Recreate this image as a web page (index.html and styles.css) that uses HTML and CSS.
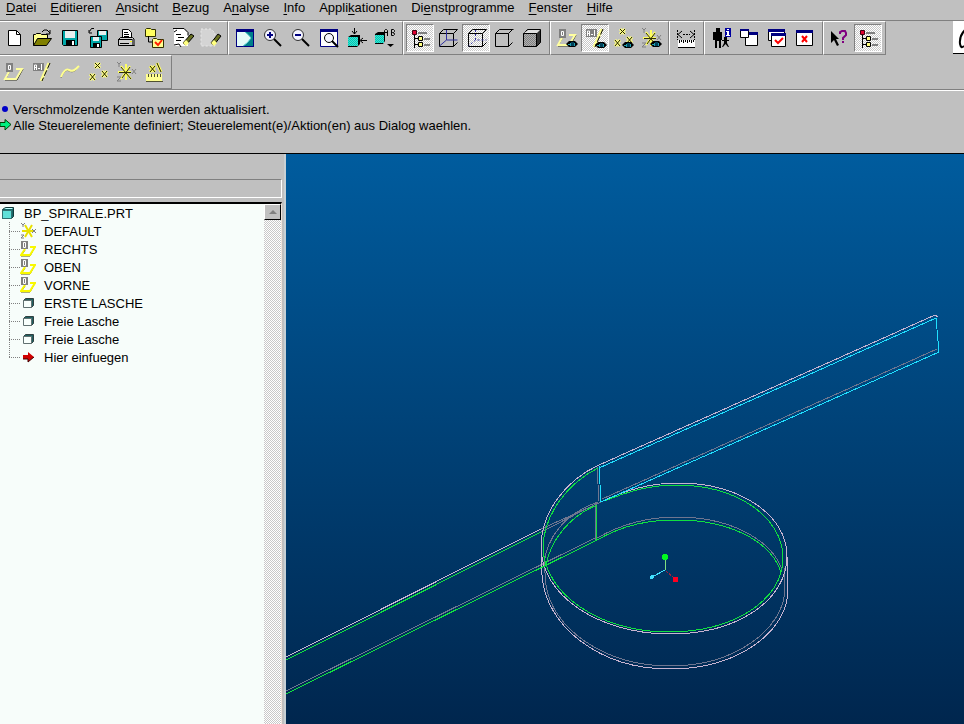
FILE: index.html
```
<!DOCTYPE html>
<html lang="de">
<head>
    <meta charset="UTF-8">
    <meta name="viewport" content="width=device-width, initial-scale=1.0">
    <title>BP_SPIRALE</title>
    <link rel="stylesheet" href="styles.css">
</head>
<body>

    <!-- icon set -->
    <svg class="sprite" xmlns="http://www.w3.org/2000/svg">
        <defs>
            <pattern id="dots" width="2" height="2" patternUnits="userSpaceOnUse">
                <path d="M0 0h1v1h-1zM1 1h1v1h-1z" fill="#808080"/>
            </pattern>
            <pattern id="teal-dots" width="2" height="2" patternUnits="userSpaceOnUse">
                <path d="M0 0h2v2h-2z" fill="#00c8b4"/>
                <path d="M0 0h1v1h-1zM1 1h1v1h-1z" fill="#40e0d0"/>
            </pattern>
        </defs>
        <symbol id="eye" viewBox="0 0 12 8">
            <path d="M0 4l3-3h6l3 3-3 3h-6z" fill="#000"/>
            <path d="M2 4h2v-1h5v3h-5v-1h-2z" fill="#20a0b0"/>
            <path d="M5 2h3v4h-3z" fill="#004058"/>
        </symbol>
        <symbol id="new" viewBox="0 0 24 24">
            <path d="M6.500 4.500h8l4 4v11h-12z" fill="#fff" stroke="#000"/>
            <path d="M14.500 4.500v4h4" fill="none" stroke="#000"/>
        </symbol>
        <symbol id="open" viewBox="0 0 24 24">
            <path d="M3.500 19.500v-11h2l1-1h4l1 1h6v4" fill="#ffff90" stroke="#000"/>
            <path d="M3.500 19.500l4-7h14l-5 7z" fill="#808000" stroke="#000"/>
            <path d="M12 6l2-2h3l3 3M20 4v4h-4" fill="none" stroke="#000"/>
        </symbol>
        <symbol id="save" viewBox="0 0 24 24">
            <path d="M4.500 4.500h15v15h-14l-1-1z" fill="#00a8a8" stroke="#000"/>
            <path d="M7 5h10v7h-10z" fill="#e8f0f0"/>
            <path d="M8 14h9v5h-9z" fill="#000"/>
            <path d="M14 15h2v4h-2z" fill="#fff"/>
        </symbol>
        <symbol id="save-copy" viewBox="0 0 24 24">
            <path d="M11.500 4.500h10v10h-10z" fill="#00a8a8" stroke="#000"/>
            <path d="M13 5h7v4h-7z" fill="#e8f0f0"/>
            <path d="M4.500 10.500h11v11h-11z" fill="#00a8a8" stroke="#000"/>
            <path d="M7 11h6v4h-6z" fill="#e8f0f0"/>
            <path d="M7 17h7v4h-7z" fill="#000"/>
            <path d="M11 18h2v3h-2z" fill="#fff"/>
            <path d="M8 2.500h-2.500l-2 3M3 4v3h3" fill="none" stroke="#000"/>
        </symbol>
        <symbol id="print" viewBox="0 0 24 24">
            <path d="M8.500 12v-8.500h6l3 3v6" fill="#fff" stroke="#000"/>
            <path d="M10 6.500h4M10 8.500h5M10 10.500h5" stroke="#000"/>
            <path d="M4.500 13.500l2-2h12l2 2v6h-16z" fill="#d0d0d0" stroke="#000"/>
            <path d="M4 13.500h16M6 17.500h9" stroke="#000"/>
            <path d="M16 15h2v1h-2z" fill="#ffff00"/>
            <path d="M18 13h3v6h-3z" fill="#606060"/>
        </symbol>
        <symbol id="folders" viewBox="0 0 24 24">
            <path d="M3.500 3.500l1-1h4l1 1h4v7h-10z" fill="#ffff60" stroke="#303000"/>
            <path d="M6.500 10v6h4" fill="none" stroke="#000"/>
            <path d="M10.500 13.500l1-1h3l1 1h6v8h-11z" fill="#ffff90" stroke="#303000"/>
            <path d="M13 16l3 3 4-5" fill="none" stroke="#ff2000" stroke-width="2"/>
        </symbol>
        <symbol id="erase" viewBox="0 0 24 24">
            <path d="M4 3h10l4 4v13h-14z" fill="#fff"/>
            <path d="M3 2.500h11l4 4v3M4 6l3-2M4 19l5-1 2 3" fill="none" stroke="#000"/>
            <path d="M6 8.500h5M8 11.500h6M6 14.500h5" stroke="#000"/>
            <path d="M13 17l8-9 3 2-8 9z" fill="#687020" stroke="#000"/>
            <path d="M13 17l3-3 3 3-3 3z" fill="#ffff80"/>
        </symbol>
        <symbol id="erase-off" viewBox="0 0 24 24">
            <path d="M3 3h10l4 4v13h-14z" fill="#d4d4d4"/>
            <path d="M3 3h10l4 4v13h-14z" fill="none" stroke="#e8e8e8" stroke-dasharray="2 2"/>
            <path d="M13 17l7-9 3 2-7 9z" fill="#687020" stroke="#000"/>
            <path d="M13 17l3-3 3 3-3 3z" fill="#ffff80"/>
        </symbol>
        <symbol id="repaint" viewBox="0 0 24 24">
            <path d="M3 3h18v18h-18z" fill="#000080"/>
            <path d="M4 6h16v14h-16z" fill="#00808a"/>
            <path d="M4 6h8q4 3 6 6-3 5-8 8h-6z" fill="#e4fbf8"/>
            <path d="M12 6q4 3 6 6-3 5-8 8" fill="none" stroke="#60d0d0"/>
        </symbol>
        <symbol id="zoom-in" viewBox="0 0 24 24">
            <circle cx="9" cy="9" r="5.500" fill="#f4f4ff" stroke="#303030"/>
            <path d="M6 9h6M9 6v6" stroke="#000080" stroke-width="2"/>
            <path d="M13 13l7 7" stroke="#000" stroke-width="2"/>
        </symbol>
        <symbol id="zoom-out" viewBox="0 0 24 24">
            <circle cx="9" cy="9" r="5.500" fill="#f4f4ff" stroke="#303030"/>
            <path d="M6 9h6" stroke="#000080" stroke-width="2"/>
            <path d="M13 13l7 7" stroke="#000" stroke-width="2"/>
        </symbol>
        <symbol id="refit" viewBox="0 0 24 24">
            <path d="M3.500 3.500h17v17h-17z" fill="#fff" stroke="#000080"/>
            <path d="M3 3h18v3h-18z" fill="#000080"/>
            <circle cx="12" cy="12" r="4.500" fill="#f4f4ff" stroke="#000"/>
            <path d="M15 15l6 6" stroke="#000" stroke-width="2"/>
        </symbol>
        <symbol id="orient" viewBox="0 0 24 24">
            <path d="M3 11l3-2h9v9l-3 3h-9z" fill="#000"/>
            <path d="M3 11h10v9h-10z" fill="url(#teal-dots)"/>
            <path d="M9.500 2v6M7 5l2.500 3 2.500-3M22 14.500h-6M18 12l-3 2.500 3 2.500" fill="none" stroke="#000"/>
        </symbol>
        <symbol id="views" viewBox="0 0 24 24">
            <path d="M2 8l3-2h7v9l-2 3h-8z" fill="#000"/>
            <path d="M2 9h9v8h-9z" fill="url(#teal-dots)"/>
            <path d="M11.500 10V4.500l1-1h1l1 1v5.500M12 6.500h2M18.500 9.500v-6h2l1 1v1l-1 1h-1l2 1v1l-1 1h-2" fill="none" stroke="#000"/>
            <path d="M14 18h7l-3.500 3z" fill="#000"/>
        </symbol>
        <symbol id="tree" viewBox="0 0 24 24">
            <path d="M6.500 6v16M6 12.500h4M6 18.500h4" fill="none" stroke="#000"/>
            <path d="M4.500 4.500h4v4h-4z" fill="#e00030" stroke="#400010"/>
            <path d="M10.500 10.500h4v4h-4zM10.500 16.500h4v4h-4z" fill="#ffff80" stroke="#000"/>
            <path d="M10 7h9M16 13h6M16 19h6" stroke="#808080" stroke-width="2"/>
        </symbol>
        <symbol id="wire" viewBox="0 0 24 24">
            <path d="M3.500 7.500h14v13h-14zM3.500 7.500l4-4h14M17.500 7.500l4-4M17.500 20.500l4-4" fill="none" stroke="#000"/>
            <path d="M10.500 4v10h11M10.500 14l-7 6" fill="none" stroke="#3030a0"/>
        </symbol>
        <symbol id="hidden" viewBox="0 0 24 24">
            <path d="M4.500 7.500h14v13h-14zM4.500 7.500l4-4h14M18.500 7.500l4-4M18.500 20.500l4-4" fill="none" stroke="#000"/>
            <path d="M11.500 4v10h11M11.500 14l-7 6" fill="none" stroke="#3030a0" stroke-dasharray="2 2"/>
        </symbol>
        <symbol id="nohidden" viewBox="0 0 24 24">
            <path d="M3.500 7.500h13v13h-13zM3.500 7.500l4-4h14M16.500 7.500l4-4M16.500 20.500l4-4" fill="none" stroke="#000"/>
        </symbol>
        <symbol id="shaded" viewBox="0 0 24 24">
            <path d="M3.500 7.500l4-4h13v13l-4 4z" fill="#303030" stroke="#000"/>
            <path d="M4 7l4-3h12l-3 3z" fill="#e0e0e0"/>
            <path d="M3.500 7.500h13v13h-13z" fill="#b0b0b0" stroke="#000"/>
            <path d="M4 8h12v12h-12z" fill="url(#dots)"/>
        </symbol>
        <symbol id="plane" viewBox="0 0 24 24">
            <path d="M8 11l-5 9h12l6-11h-7" fill="none" stroke="#303020"/>
            <path d="M8 10l-5 9h11l6-10h-6" fill="none" stroke="#ffffa0" stroke-width="2"/>
            <path d="M4 3h7v9h-7z" fill="#808080"/>
            <path d="M6.500 5.500h2v4h-2z" fill="none" stroke="#fff"/>
        </symbol>
        <symbol id="axis" viewBox="0 0 24 24">
            <path d="M3 3h11v8h-11z" fill="#808080"/>
            <path d="M4.500 10v-5h2v5M4 7.500h3M8 8.500h2M11.500 4v6" fill="none" stroke="#fff"/>
            <path d="M19 3l-8 18" stroke="#ffff90" stroke-width="3"/>
            <path d="M20 3l-8 18" stroke="#000" stroke-dasharray="6 2"/>
        </symbol>
        <symbol id="curve" viewBox="0 0 24 24">
            <path d="M3 18c2-5 5-9 8-7 4 2 6 0 10-4" fill="none" stroke="#707060"/>
            <path d="M3 17c2-5 5-9 8-7 4 2 6 0 10-4" fill="none" stroke="#ffff90" stroke-width="2"/>
        </symbol>
        <symbol id="points" viewBox="0 0 24 24">
            <path d="M9 3l5 5M14 3l-5 5M4 14l5 6M9 14l-5 6M16 11l5 6M21 11l-5 6" stroke="#ffff80" stroke-width="3"/>
            <path d="M9 3l5 5M14 3l-5 5M4 14l5 6M9 14l-5 6M16 11l5 6M21 11l-5 6" stroke="#202000"/>
        </symbol>
        <symbol id="csys" viewBox="0 0 24 24">
            <path d="M3 2l2 2 2-2M5 4v3M18 9l4 5M22 9l-4 5M3 17h4l-4 4h4" fill="none" stroke="#808080"/>
            <path d="M4 12h13M12 4v16M7 6l10 13M16 6L7 19" stroke="#ffff60" stroke-width="2"/>
            <path d="M5 12.500h12M7 7l10 12M16 7L8 18" stroke="#303000"/>
        </symbol>
        <symbol id="analysis" viewBox="0 0 24 24">
            <path d="M4 14h16v7h-16z" fill="#ffff90"/>
            <path d="M4 21.500h17M6.500 14v3M9.500 14v3M12.500 14v3M15.500 14v3M18.500 14v3" stroke="#505030"/>
            <path d="M8 6l5 6M13 6l-5 6M15 3l4 9" stroke="#ffff60" stroke-width="3"/>
            <path d="M8 6l5 6M13 6l-5 6M15 3l4 9" stroke="#202000"/>
        </symbol>
        <symbol id="plane-eye" viewBox="0 0 24 24">
            <use href="#plane" width="24" height="24"/>
            <use href="#eye" x="11" y="14" width="12" height="8"/>
        </symbol>
        <symbol id="axis-eye" viewBox="0 0 24 24">
            <use href="#axis" width="24" height="24"/>
            <use href="#eye" x="12" y="15" width="12" height="8"/>
        </symbol>
        <symbol id="points-eye" viewBox="0 0 24 24">
            <use href="#points" width="24" height="24"/>
            <use href="#eye" x="11" y="15" width="12" height="8"/>
        </symbol>
        <symbol id="csys-eye" viewBox="0 0 24 24">
            <use href="#csys" width="24" height="24"/>
            <use href="#eye" x="11" y="14" width="12" height="8"/>
        </symbol>
        <symbol id="measure" viewBox="0 0 24 24">
            <path d="M3.500 4v10M20.500 4v10M9 8.500h7" stroke="#000" stroke-dasharray="2 1"/>
            <path d="M8 5l-4 3.500 4 3.500M16 5l4 3.500-4 3.500" fill="none" stroke="#000"/>
            <path d="M4 14h17v7h-17z" fill="#fff"/>
            <path d="M4 21.500h17M5.500 14v3M7.500 14v2M9.500 14v3M11.500 14v2M13.500 14v3M15.500 14v2M17.500 14v3M19.500 14v2" stroke="#000"/>
        </symbol>
        <symbol id="people" viewBox="0 0 24 24">
            <path d="M7 2h4v4h2v8h-1v8h-2v-7h-2v7h-2v-8h-2v-8h3z" fill="#000"/>
            <path d="M15 11h3v3h2v1h-2v2l2 4h-1l-2.500-3-2.500 3h-1l2-4v-2h-2v-1h2z" fill="#000"/>
            <path d="M16 2h6v9h-6z" fill="#0000a0"/>
            <path d="M18 3h2v1h-2zM17 5h3v4h1v1h-4v-1h1v-3h-1z" fill="#fff"/>
        </symbol>
        <symbol id="windows" viewBox="0 0 24 24">
            <path d="M8.500 6.500h12v13h-12z" fill="#fff" stroke="#000"/>
            <path d="M8 6h13v3h-13z" fill="#000080"/>
            <path d="M3.500 4.500h8v7h-8z" fill="#fff" stroke="#000"/>
            <path d="M3 3h9v2h-9z" fill="#000080"/>
        </symbol>
        <symbol id="activate" viewBox="0 0 24 24">
            <path d="M3.500 4.500h16v10h-16z" fill="#fff" stroke="#000"/>
            <path d="M3 3h17v3h-17z" fill="#000080"/>
            <path d="M6.500 7.500h14v13h-14z" fill="#fff" stroke="#000"/>
            <path d="M6 7h15v3h-15z" fill="#000080"/>
            <path d="M10 14l3 3 5-5" fill="none" stroke="#ff0000" stroke-width="2"/>
        </symbol>
        <symbol id="close" viewBox="0 0 24 24">
            <path d="M3.500 4.500h16v15h-16z" fill="#fff" stroke="#000"/>
            <path d="M3 4h17v3h-17z" fill="#000080"/>
            <path d="M9 10l5 6M14 10l-5 6" stroke="#ff0000" stroke-width="2"/>
        </symbol>
        <symbol id="help" viewBox="0 0 24 24">
            <path d="M3 5l8 8h-3l3 6-2 1-3-6-3 3z" fill="#000"/>
            <path d="M12 8v-2l2-1h3l1 2v2l-3 3v2" fill="none" stroke="#800080" stroke-width="2"/>
            <path d="M14 15h2v2h-2z" fill="#800080"/>
        </symbol>
        <symbol id="part" viewBox="0 0 16 16">
            <path d="M2.500 4.500l3-2h8v9l-2 2h-9z" fill="#186868" stroke="#103838"/>
            <path d="M2.500 5.500h9v8h-9z" fill="#60e0d8" stroke="#307070"/>
            <path d="M4 4h8l1-1h-7z" fill="#c0ffff"/>
        </symbol>
        <symbol id="feature" viewBox="0 0 16 16">
            <path d="M3.500 5.500l2-2h8v7l-2 2z" fill="#206060" stroke="#304040"/>
            <path d="M3.500 5.500h8v7h-8z" fill="#f8fffc" stroke="#607070"/>
        </symbol>
        <symbol id="tree-csys" viewBox="0 0 16 16">
            <path d="M1 0l2 2 2-2M3 2v2M12 6l4 4M16 6l-4 4M1 12h3l-3 3h3" fill="none" stroke="#808080"/>
            <path d="M2 8h11M5 2l7 12M12 2l-7 12" stroke="#e8e000" stroke-width="2"/>
        </symbol>
        <symbol id="tree-plane" viewBox="0 0 16 16">
            <path d="M5 9l-4 6h9l5-9h-5" fill="none" stroke="#606000"/>
            <path d="M5 8l-4 6h9l5-8h-5" fill="none" stroke="#f8f800" stroke-width="2"/>
            <path d="M1 0h7v8h-7z" fill="#808080"/>
            <path d="M3.500 1.500h2v5h-2z" fill="none" stroke="#fff"/>
        </symbol>
        <symbol id="insert" viewBox="0 0 16 16">
            <path d="M3 6h5v-3l6 5-6 5v-3h-5z" fill="#d00000"/>
            <path d="M3 10h5v3l6-5" fill="none" stroke="#400000"/>
        </symbol>
    </svg>

    <nav class="menubar">
        <button><u>D</u>atei</button>
        <button><u>E</u>ditieren</button>
        <button><u>A</u>nsicht</button>
        <button><u>B</u>ezug</button>
        <button>A<u>n</u>alyse</button>
        <button><u>I</u>nfo</button>
        <button>Appli<u>k</u>ationen</button>
        <button>Di<u>e</u>nstprogramme</button>
        <button><u>F</u>enster</button>
        <button><u>H</u>ilfe</button>
    </nav>

    <div class="toolbar toolbar-main">
        <div class="group group-first">
            <button class="tool" aria-label="Neu"><svg><use href="#new"/></svg></button>
            <button class="tool" aria-label="Oeffnen"><svg><use href="#open"/></svg></button>
            <button class="tool" aria-label="Speichern"><svg><use href="#save"/></svg></button>
            <button class="tool" aria-label="Kopie speichern"><svg><use href="#save-copy"/></svg></button>
            <button class="tool" aria-label="Drucken"><svg><use href="#print"/></svg></button>
            <button class="tool" aria-label="Arbeitsverzeichnis"><svg><use href="#folders"/></svg></button>
            <button class="tool" aria-label="Wegnehmen"><svg><use href="#erase"/></svg></button>
            <button class="tool" aria-label="Nicht angezeigte wegnehmen"><svg><use href="#erase-off"/></svg></button>
        </div>
        <div class="group">
            <button class="tool" aria-label="Bildaufbau"><svg><use href="#repaint"/></svg></button>
            <button class="tool" aria-label="Vergroessern"><svg><use href="#zoom-in"/></svg></button>
            <button class="tool" aria-label="Verkleinern"><svg><use href="#zoom-out"/></svg></button>
            <button class="tool" aria-label="Einpassen"><svg><use href="#refit"/></svg></button>
            <button class="tool" aria-label="Orientieren"><svg><use href="#orient"/></svg></button>
            <button class="tool" aria-label="Ansichten"><svg><use href="#views"/></svg></button>
        </div>
        <div class="group">
            <button class="tool pressed" aria-label="Modellbaum"><svg><use href="#tree"/></svg></button>
            <button class="tool" aria-label="Drahtmodell"><svg><use href="#wire"/></svg></button>
            <button class="tool pressed" aria-label="Verdeckte Kanten"><svg><use href="#hidden"/></svg></button>
            <button class="tool" aria-label="Keine verdeckten Kanten"><svg><use href="#nohidden"/></svg></button>
            <button class="tool" aria-label="Schattiert"><svg><use href="#shaded"/></svg></button>
        </div>
        <div class="group">
            <button class="tool" aria-label="Ebenen anzeigen"><svg><use href="#plane-eye"/></svg></button>
            <button class="tool pressed" aria-label="Achsen anzeigen"><svg><use href="#axis-eye"/></svg></button>
            <button class="tool" aria-label="Punkte anzeigen"><svg><use href="#points-eye"/></svg></button>
            <button class="tool" aria-label="KSys anzeigen"><svg><use href="#csys-eye"/></svg></button>
        </div>
        <div class="group">
            <button class="tool" aria-label="Messen"><svg><use href="#measure"/></svg></button>
        </div>
        <div class="group">
            <button class="tool" aria-label="Modellinfo"><svg><use href="#people"/></svg></button>
            <button class="tool" aria-label="Neues Fenster"><svg><use href="#windows"/></svg></button>
            <button class="tool" aria-label="Fenster aktivieren"><svg><use href="#activate"/></svg></button>
            <button class="tool" aria-label="Fenster schliessen"><svg><use href="#close"/></svg></button>
        </div>
        <div class="group">
            <button class="tool" aria-label="Kontexthilfe"><svg><use href="#help"/></svg></button>
            <button class="tool pressed" aria-label="Modellbaum ein/aus"><svg><use href="#tree"/></svg></button>
        </div>
        <svg class="brand" viewBox="0 0 11 32">
            <path d="M12 9q-6 6-5 14 1 5 4 2" fill="none" stroke="#000" stroke-width="2"/>
        </svg>
    </div>

    <div class="toolbar toolbar-datum">
        <div class="group group-first">
            <button class="tool" aria-label="Bezugsebene"><svg><use href="#plane"/></svg></button>
            <button class="tool" aria-label="Bezugsachse"><svg><use href="#axis"/></svg></button>
            <button class="tool" aria-label="Bezugskurve"><svg><use href="#curve"/></svg></button>
            <button class="tool" aria-label="Bezugspunkt"><svg><use href="#points"/></svg></button>
            <button class="tool" aria-label="Koordinatensystem"><svg><use href="#csys"/></svg></button>
            <button class="tool" aria-label="Analyse"><svg><use href="#analysis"/></svg></button>
        </div>
    </div>

    <div class="messages">
        <p>
            <svg class="mark" viewBox="0 0 12 16"><circle cx="5" cy="8" r="3" fill="#0000c8"/></svg>
            Verschmolzende Kanten werden aktualisiert.
        </p>
        <p>
            <svg class="mark" viewBox="0 0 12 16"><path d="M0 5.500h5v-3l6 5-6 5.500v-3.500h-5z" fill="#00f080" stroke="#004000"/></svg>
            Alle Steuerelemente definiert; Steuerelement(e)/Aktion(en) aus Dialog waehlen.
        </p>
    </div>

    <main class="workspace">
        <aside class="sidebar">
            <div class="sidebar-menu"></div>
            <div class="sidebar-head"></div>
            <div class="tree-box">
                <ul class="tree">
                    <li class="root"><svg><use href="#part"/></svg>BP_SPIRALE.PRT</li>
                    <li><svg><use href="#tree-csys"/></svg>DEFAULT</li>
                    <li><svg><use href="#tree-plane"/></svg>RECHTS</li>
                    <li><svg><use href="#tree-plane"/></svg>OBEN</li>
                    <li><svg><use href="#tree-plane"/></svg>VORNE</li>
                    <li><svg><use href="#feature"/></svg>ERSTE LASCHE</li>
                    <li><svg><use href="#feature"/></svg>Freie Lasche</li>
                    <li><svg><use href="#feature"/></svg>Freie Lasche</li>
                    <li><svg><use href="#insert"/></svg>Hier einfuegen</li>
                </ul>
                <div class="scrollbar">
                    <button class="scroll-up" aria-label="Nach oben">
                        <svg viewBox="0 0 8 4"><path d="M4 0l4 4h-8z" fill="#808080"/></svg>
                    </button>
                </div>
            </div>
        </aside>

        <section class="viewport">
            <svg class="model" viewBox="286 154 678 570" preserveAspectRatio="xMinYMin slice">
                <!-- lower band edge -->
                <g class="dim">
                    <path d="M544 560L546 585C552 628 604 666 670 666C736 666 785 628 785 588L784 568"/>
                    <path d="M597 538C625 522 650 517 677 517C728 517 770 538 782 569"/>
                    <path d="M598 502C566 513 546 537 544 565"/>
                    <path d="M541 529L601 502M541 532L596 504M286 691L597 537M595 505L596 540"/>
                    <path d="M597 467L599 501M602 499L937 349"/>
                </g>
                <g class="edge">
                    <path d="M541 547L542 575C545 625 598 669 670 669C740 669 788 630 788 590L787 556"/>
                    <path d="M599 465C566 480 541 512 541 547C541 595 598 634 670 634C738 634 787 600 787 556C787 515 740 483 678 483C650 483 625 490 601 502"/>
                    <path d="M286 657L541 529M599 465L935 315L938 317"/>
                </g>
                <g class="green">
                    <path d="M598 468C568 483 544 514 543 547C544 594 600 632 668 632C734 632 783 600 783 558C783 518 738 485 676 485C650 485 628 491 605 501"/>
                    <path d="M597 540C625 524 650 520 677 520C728 520 770 540 781 572"/>
                    <path d="M597 505C570 516 550 540 546 566"/>
                    <path d="M286 660L541 532M286 694L597 540M596 504L597 540"/>
                </g>
                <g class="cyan">
                    <path d="M599 468L936 318L939 352L601 502L599 466"/>
                </g>
                <!-- orientation triad -->
                <path d="M665.500 570v-12" stroke="#80e080"/>
                <path d="M665 570l-13 7" stroke="#40e0ff"/>
                <path d="M666 571l8 7" stroke="#a02040" stroke-dasharray="3 1"/>
                <circle cx="665" cy="557" r="3" fill="#00f820"/>
                <circle cx="652" cy="577" r="2" fill="#40e0ff"/>
                <path d="M673 577h5v5h-5z" fill="#ff0020"/>
            </svg>
        </section>
    </main>

</body>
</html>
```
FILE: styles.css
```
* {
    box-sizing: border-box;
}
body {
    display: flex;
    flex-direction: column;
    height: 100vh;
    margin: 0;
    overflow: hidden;
    background-color: #c0c0c0;
    color: #000;
    font-family: "Liberation Sans", Arial, sans-serif;
    font-size: 13px;
}
button {
    padding: 0;
    border: none;
    background: none;
    color: inherit;
    font: inherit;
}
.sprite {
    position: absolute;
    width: 0;
    height: 0;
}

/* menu */
.menubar {
    display: flex;
    gap: 14px;
    height: 20px;
    padding: 0 6px 5px;
}
.menubar u {
    text-underline-offset: 2px;
}

/* toolbars */
.toolbar {
    display: flex;
}
.toolbar-main {
    border-top: 1px solid #808080;
}
.toolbar-datum {
    border-bottom: 1px solid #808080;
}
.group {
    display: flex;
    padding: 2px 3px 2px 2px;
    border: 1px solid;
    border-color: #fff #808080 #808080 #fff;
}
.group-first {
    padding-left: 0;
    border-left: none;
}
.tool {
    display: flex;
    align-items: center;
    justify-content: center;
    width: 28px;
    height: 28px;
}
.tool svg {
    width: 24px;
    height: 24px;
}
.pressed {
    border: 1px solid;
    border-color: #808080 #fff #fff #808080;
    background: repeating-conic-gradient(#fff 0 25%, #c8c8c8 0 50%) 0 0 / 2px 2px;
}
.brand {
    width: 11px;
    height: 33px;
    margin-left: auto;
    border-bottom: 1px solid #000;
    background-color: #fff;
}

/* message area */
.messages {
    height: 64px;
    padding-top: 10px;
    border-top: 1px solid #fff;
    border-bottom: 1px solid #000;
}
.messages p {
    display: flex;
    align-items: center;
    gap: 1px;
    height: 16px;
    margin: 0;
    white-space: nowrap;
}
.mark {
    width: 12px;
    height: 16px;
}

/* model tree */
.workspace {
    display: flex;
    flex: 1;
    min-height: 0;
}
.sidebar {
    display: flex;
    flex-direction: column;
    width: 286px;
    padding-right: 2px;
    border-right: 2px solid #c8d0d4;
}
.sidebar-menu {
    height: 25px;
}
.sidebar-head {
    height: 19px;
    border-top: 1px solid #808080;
    border-right: 1px solid #fff;
    border-bottom: 1px solid #fff;
}
.tree-box {
    display: flex;
    flex: 1;
    margin-top: 4px;
    border-top: 2px solid #000;
    border-right: 1px solid #f0e4dc;
}
.tree {
    flex: 1;
    margin: 0;
    padding: 0 0 0 9px;
    background-color: #f7fdfa;
    list-style: none;
}
.tree li {
    display: flex;
    align-items: center;
    height: 18px;
}
/* dotted branch lines */
.tree li::before {
    content: "";
    width: 11px;
    height: 18px;
    background:
        linear-gradient(90deg, #808080 50%, transparent 0) 0 9px / 2px 1px repeat-x,
        linear-gradient(#808080 50%, transparent 0) 0 0 / 1px 2px repeat-y;
}
.tree li:last-child::before {
    height: 10px;
    margin-bottom: 8px;
}
.tree .root {
    margin-left: -9px;
}
.tree .root::before {
    display: none;
}
.tree svg {
    width: 16px;
    height: 16px;
    margin-right: 8px;
}
.scrollbar {
    width: 17px;
    background: repeating-conic-gradient(#fff 0 25%, #c8c8c8 0 50%) 0 0 / 2px 2px;
}
.scroll-up {
    display: flex;
    align-items: center;
    justify-content: center;
    width: 17px;
    height: 16px;
    border: 1px solid;
    border-color: #fff #000 #000 #fff;
    background-color: #c0c0c0;
}
.scroll-up svg {
    width: 8px;
    height: 4px;
}

/* 3D view */
.viewport {
    flex: 1;
    min-width: 0;
    background: linear-gradient(#005c9e, #00264e);
}
.model {
    display: block;
    width: 100%;
    height: 100%;
    fill: none;
    stroke-width: 1px;
    shape-rendering: crispEdges;
}
.dim {
    stroke: #6f7690;
}
.edge {
    stroke: #c8b4d0;
}
.green {
    stroke: #10e040;
}
.cyan {
    stroke: #20e0ff;
}
```
